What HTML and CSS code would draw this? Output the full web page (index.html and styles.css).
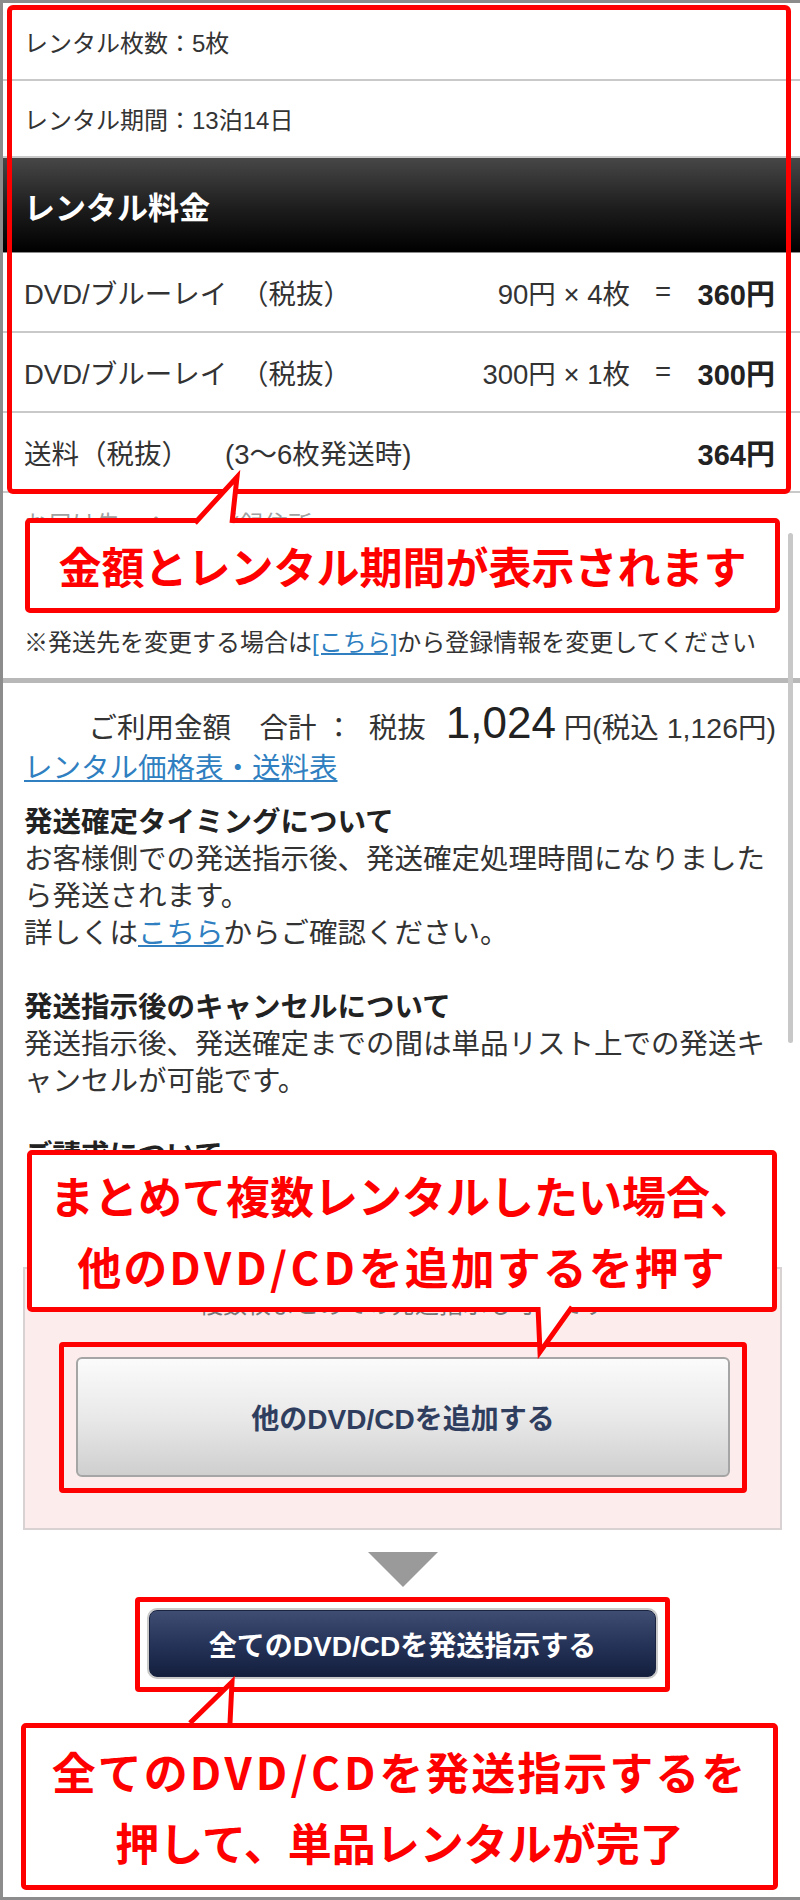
FILE: index.html
```html
<!DOCTYPE html>
<html lang="ja">
<head>
<meta charset="utf-8">
<title>レンタル料金</title>
<link rel="stylesheet" href="styles.css">
</head>
<body>
<div class="page">
  <section class="rental">
    <div class="info-row">レンタル枚数：5枚</div>
    <div class="info-row info-row--period">レンタル期間：13泊14日</div>
    <h2 class="fee-head">レンタル料金</h2>
    <div class="fee-row"><span class="fee-label">DVD/ブルーレイ　（税抜）</span><span class="fee-qty">90円 × 4枚</span><span class="fee-eq">=</span><span class="fee-price">360円</span></div>
    <div class="fee-row"><span class="fee-label">DVD/ブルーレイ　（税抜）</span><span class="fee-qty">300円 × 1枚</span><span class="fee-eq">=</span><span class="fee-price">300円</span></div>
    <div class="fee-row"><span class="fee-label">送料（税抜）<span class="fee-note">(3〜6枚発送時)</span></span><span class="fee-qty"></span><span class="fee-eq"></span><span class="fee-price">364円</span></div>
  </section>

  <section class="address">
    <p class="address-line">お届け先　：　ご登録住所</p>
    <p class="address-line">お届け予定：発送から1〜2日</p>
    <p class="notice">※発送先を変更する場合は<a class="link" href="#">[こちら]</a>から登録情報を変更してください</p>
  </section>

  <div class="divider"></div>

  <section class="summary">
    <p class="total">ご利用金額　合計&nbsp;：&nbsp;&nbsp;税抜&nbsp;<span class="total-amount">1,024</span>&nbsp;円(税込 1,126円)</p>
    <a class="link link--block" href="#">レンタル価格表・送料表</a>
    <h3 class="info-title">発送確定タイミングについて</h3>
    <p class="info-text">お客様側での発送指示後、発送確定処理時間になりましたら発送されます。<br>詳しくは<a class="link" href="#">こちら</a>からご確認ください。</p>
    <h3 class="info-title info-title--gap">発送指示後のキャンセルについて</h3>
    <p class="info-text">発送指示後、発送確定までの間は単品リスト上での発送キャンセルが可能です。</p>
    <h3 class="info-title info-title--gap">ご請求について</h3>
    <p class="info-text">ご請求は発送確定時に行われます。</p>
  </section>

  <section class="add-box">
    <p class="add-note">複数枚まとめての発送指示も可能です</p>
    <div class="highlight highlight--gray">
      <button class="btn btn--gray" type="button">他のDVD/CDを追加する</button>
    </div>
  </section>

  <div class="arrow-down"></div>

  <div class="highlight highlight--navy">
    <button class="btn btn--navy" type="button">全てのDVD/CDを発送指示する</button>
  </div>

  <div class="callout callout--bottom"><span class="callout-line callout-line--wide">全ての<span class="callout-latin">DVD/CD</span>を発送指示するを</span><span class="callout-line">押して、単品レンタルが完了</span></div>

  <div class="page-frame"></div>
  <div class="scrollbar"></div>
  <div class="frame-main"></div>
  <div class="callout callout--amount"><span class="callout-line">金額とレンタル期間が表示されます</span></div>
  <div class="callout callout--add"><span class="callout-line">まとめて複数レンタルしたい場合、</span><span class="callout-line callout-line--wide">他の<span class="callout-latin">DVD/CD</span>を追加するを押す</span></div>

  <svg class="tails" width="800" height="1900" viewBox="0 0 800 1900" aria-hidden="true">
    <path d="M195,523 L237,477 L232,523" />
    <path d="M538,1307 L540,1352 L572,1307" />
    <path d="M190,1723 L232,1682 L230,1723" />
  </svg>
</div>
</body>
</html>
```

FILE: styles.css
```css
* {
  box-sizing: border-box;
}

body {
  margin: 0;
  background: #ffffff;
}

.page {
  position: relative;
  width: 800px;
  height: 1900px;
  padding-top: 3px;
  overflow: hidden;
  background: #ffffff;
  font-family: "Liberation Sans", "Noto Sans CJK JP", sans-serif;
  color: #333333;
}

p,
h2,
h3 {
  margin: 0;
}

/* ---------- rental info ---------- */
.info-row {
  height: 78px;
  display: flex;
  align-items: center;
  padding-left: 24px;
  font-size: 24px;
  color: #333333;
  border-bottom: 2px solid #c9c9c9;
}

.info-row--period {
  height: 77px;
}

.fee-head {
  height: 95px;
  display: flex;
  align-items: center;
  padding-left: 24px;
  font-size: 31px;
  font-weight: 700;
  color: #ffffff;
  background: linear-gradient(#474747 0%, #1c1c1c 55%, #000000 100%);
  border-bottom: 1px solid #8a8a8a;
}

.fee-row {
  height: 80px;
  display: grid;
  grid-template-columns: 1fr auto 66px 79px;
  align-items: center;
  padding: 0 25px 0 24px;
  font-size: 27.5px;
  color: #333333;
  border-bottom: 2px solid #c9c9c9;
  white-space: nowrap;
}

.fee-qty {
  text-align: right;
}

.fee-eq {
  text-align: center;
}

.fee-price {
  text-align: right;
  font-size: 29px;
  font-weight: 700;
  color: #222222;
}

.fee-note {
  margin-left: 36px;
}

/* ---------- address ---------- */
.address {
  padding: 14px 24px 0 24px;
}

.address-line {
  font-size: 24px;
  line-height: 36px;
  color: #a0a0a0;
}

.notice {
  margin-top: 46px;
  font-size: 24px;
  line-height: 36px;
  color: #333333;
  white-space: nowrap;
}

.link {
  color: #2f7fc1;
  text-decoration: underline;
}

.divider {
  margin-top: 17px;
  height: 5px;
  background: #b8b8b8;
}

/* ---------- summary ---------- */
.summary {
  padding: 18px 24px 0 24px;
  font-size: 28.5px;
}

.total {
  text-align: right;
  font-size: 28.5px;
  line-height: 44px;
  color: #333333;
  white-space: nowrap;
}

.total-amount {
  margin-left: 12px;
  font-size: 44px;
  color: #222222;
}

.link--block {
  display: block;
  width: max-content;
  font-size: 28.5px;
  line-height: 36px;
}

.info-title {
  margin-top: 18px;
  font-size: 28.5px;
  line-height: 37px;
  font-weight: 700;
  color: #222222;
}

.info-title--gap {
  margin-top: 37px;
}

.info-text {
  font-size: 28.5px;
  line-height: 37px;
  color: #333333;
}

/* ---------- add box ---------- */
.add-box {
  margin: 56px 18px 0 23px;
  padding: 18px 33px 35px 34px;
  background: #fcecec;
  border: 2px solid #d9d2d2;
}

.add-note {
  text-align: center;
  font-size: 24px;
  line-height: 36px;
  color: #777777;
}

.highlight {
  border: 5px solid #ff0000;
  border-radius: 4px;
}

.highlight--gray {
  margin-top: 19px;
  padding: 10px 12px 11px 12px;
}

.highlight--navy {
  width: 535px;
  margin: 10px auto 0 135px;
  padding: 8px 9px 10px 9px;
}

.btn {
  display: block;
  width: 100%;
  font-family: "Liberation Sans", "Noto Sans CJK JP", sans-serif;
  font-size: 28px;
  font-weight: 700;
  cursor: pointer;
}

.btn--gray {
  height: 120px;
  color: #2f3e5e;
  background: linear-gradient(#fbfbfb 0%, #e9e9e9 50%, #cfcfcf 100%);
  border: 2px solid #a5a5a5;
  border-radius: 6px;
}

.btn--navy {
  height: 67px;
  color: #ffffff;
  background: linear-gradient(#3f4d72 0%, #26345a 50%, #141f3d 100%);
  border: 1px solid #1a2440;
  border-radius: 8px;
  box-shadow: 0 0 0 2px #c9c9c9;
}

.arrow-down {
  width: 0;
  height: 0;
  margin: 22px auto 0 368px;
  border-left: 35px solid transparent;
  border-right: 35px solid transparent;
  border-top: 35px solid #9a9a9a;
}

/* ---------- annotation overlays ---------- */
.callout {
  display: flex;
  flex-direction: column;
  align-items: center;
  justify-content: center;
  background: #ffffff;
  border: 5px solid #ff0000;
  border-radius: 5px;
  font-family: "Noto Sans CJK JP", sans-serif;
  font-weight: 700;
  font-size: 44px;
  line-height: 71px;
  color: #ff0000;
  text-align: center;
  white-space: nowrap;
}

.callout-line {
  display: block;
}

.callout-line--wide {
  letter-spacing: 2px;
}

.callout-latin {
  letter-spacing: 4px;
}

.callout--bottom {
  width: 757px;
  height: 167px;
  margin: 31px 0 0 21px;
}

.callout--amount {
  position: absolute;
  left: 25px;
  top: 518px;
  width: 755px;
  height: 95px;
  font-size: 43px;
  z-index: 3;
}

.callout--add {
  position: absolute;
  left: 27px;
  top: 1150px;
  width: 750px;
  height: 162px;
  z-index: 3;
}

.frame-main {
  position: absolute;
  left: 7px;
  top: 5px;
  width: 784px;
  height: 489px;
  border: 5px solid #ff0000;
  border-radius: 6px;
  z-index: 2;
}

.page-frame {
  position: absolute;
  inset: 0;
  border: 3px solid #8c8c8c;
  border-right: 0;
  z-index: 1;
}

.scrollbar {
  position: absolute;
  left: 788px;
  top: 533px;
  width: 5px;
  height: 510px;
  border-radius: 3px;
  background: #c8c8c8;
  z-index: 1;
}

.tails {
  position: absolute;
  left: 0;
  top: 0;
  z-index: 4;
}

.tails path {
  fill: #ffffff;
  stroke: #ff0000;
  stroke-width: 5;
  stroke-linejoin: miter;
  stroke-miterlimit: 10;
}
```
